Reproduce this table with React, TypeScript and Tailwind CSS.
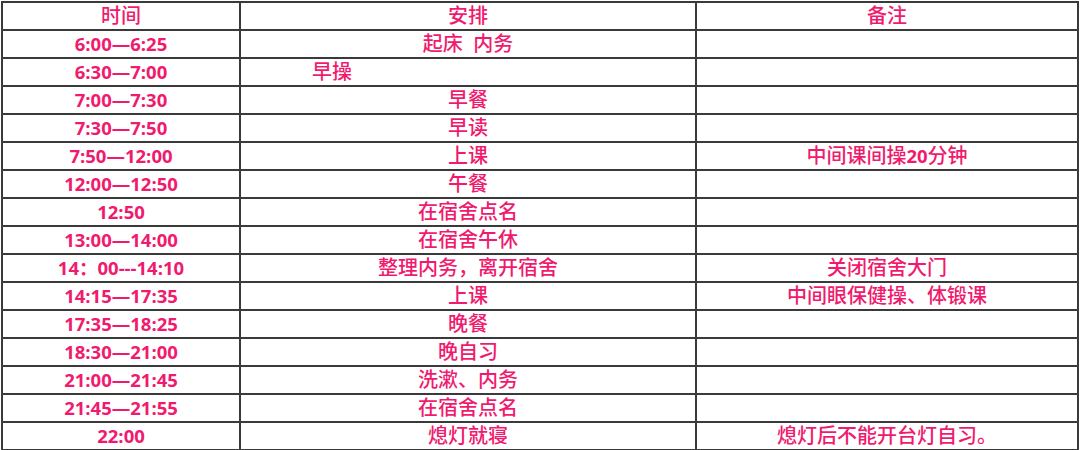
import React from "react";

const rows: [string, string, string, boolean?][] = [
  ["6:00—6:25", "起床\u00a0\u00a0内务", ""],
  ["6:30—7:00", "早操", "", true],
  ["7:00—7:30", "早餐", ""],
  ["7:30—7:50", "早读", ""],
  ["7:50—12:00", "上课", "中间课间操20分钟"],
  ["12:00—12:50", "午餐", ""],
  ["12:50", "在宿舍点名", ""],
  ["13:00—14:00", "在宿舍午休", ""],
  ["14：00---14:10", "整理内务，离开宿舍", "关闭宿舍大门"],
  ["14:15—17:35", "上课", "中间眼保健操、体锻课"],
  ["17:35—18:25", "晚餐", ""],
  ["18:30—21:00", "晚自习", ""],
  ["21:00—21:45", "洗漱、内务", ""],
  ["21:45—21:55", "在宿舍点名", ""],
  ["22:00", "熄灯就寝", "熄灯后不能开台灯自习。"],
];

export default function App() {
  const font = "font-['Open_Sans','Noto_Sans_CJK_SC',sans-serif]";
  const cell = "border-2 border-[#3a3a3a] p-0 leading-none";
  return (
    <div className={`w-[1080px] h-[450px] bg-white pl-px pt-px ${font}`}>
      <table className="w-[1076px] table-fixed border-collapse border-2 border-[#2e2e2e] text-[#f01a6e]">
        <colgroup>
          <col className="w-[238px]" />
          <col className="w-[456px]" />
          <col className="w-[382px]" />
        </colgroup>
        <tbody>
          <tr className="h-[28px]">
            <td className={`${cell} text-center text-[20px] font-medium`}>时间</td>
            <td className={`${cell} text-center text-[20px] font-medium`}>安排</td>
            <td className={`${cell} text-center text-[20px] font-medium`}>备注</td>
          </tr>
          {rows.map(([t, a, n, left], i) => (
            <tr key={i} className="h-[28px]">
              <td className={`${cell} text-center text-[18.5px] font-bold`}>{t}</td>
              <td
                className={`${cell} text-[20px] font-medium ${
                  left ? "text-left pl-[71px]" : "text-center"
                }`}
              >
                {a}
              </td>
              <td className={`${cell} text-center text-[20px] font-medium`}>
                {n.includes("20") ? (
                  <>
                    中间课间操<span className="font-bold text-[18.5px]">20</span>分钟
                  </>
                ) : (
                  n
                )}
              </td>
            </tr>
          ))}
        </tbody>
      </table>
    </div>
  );
}
